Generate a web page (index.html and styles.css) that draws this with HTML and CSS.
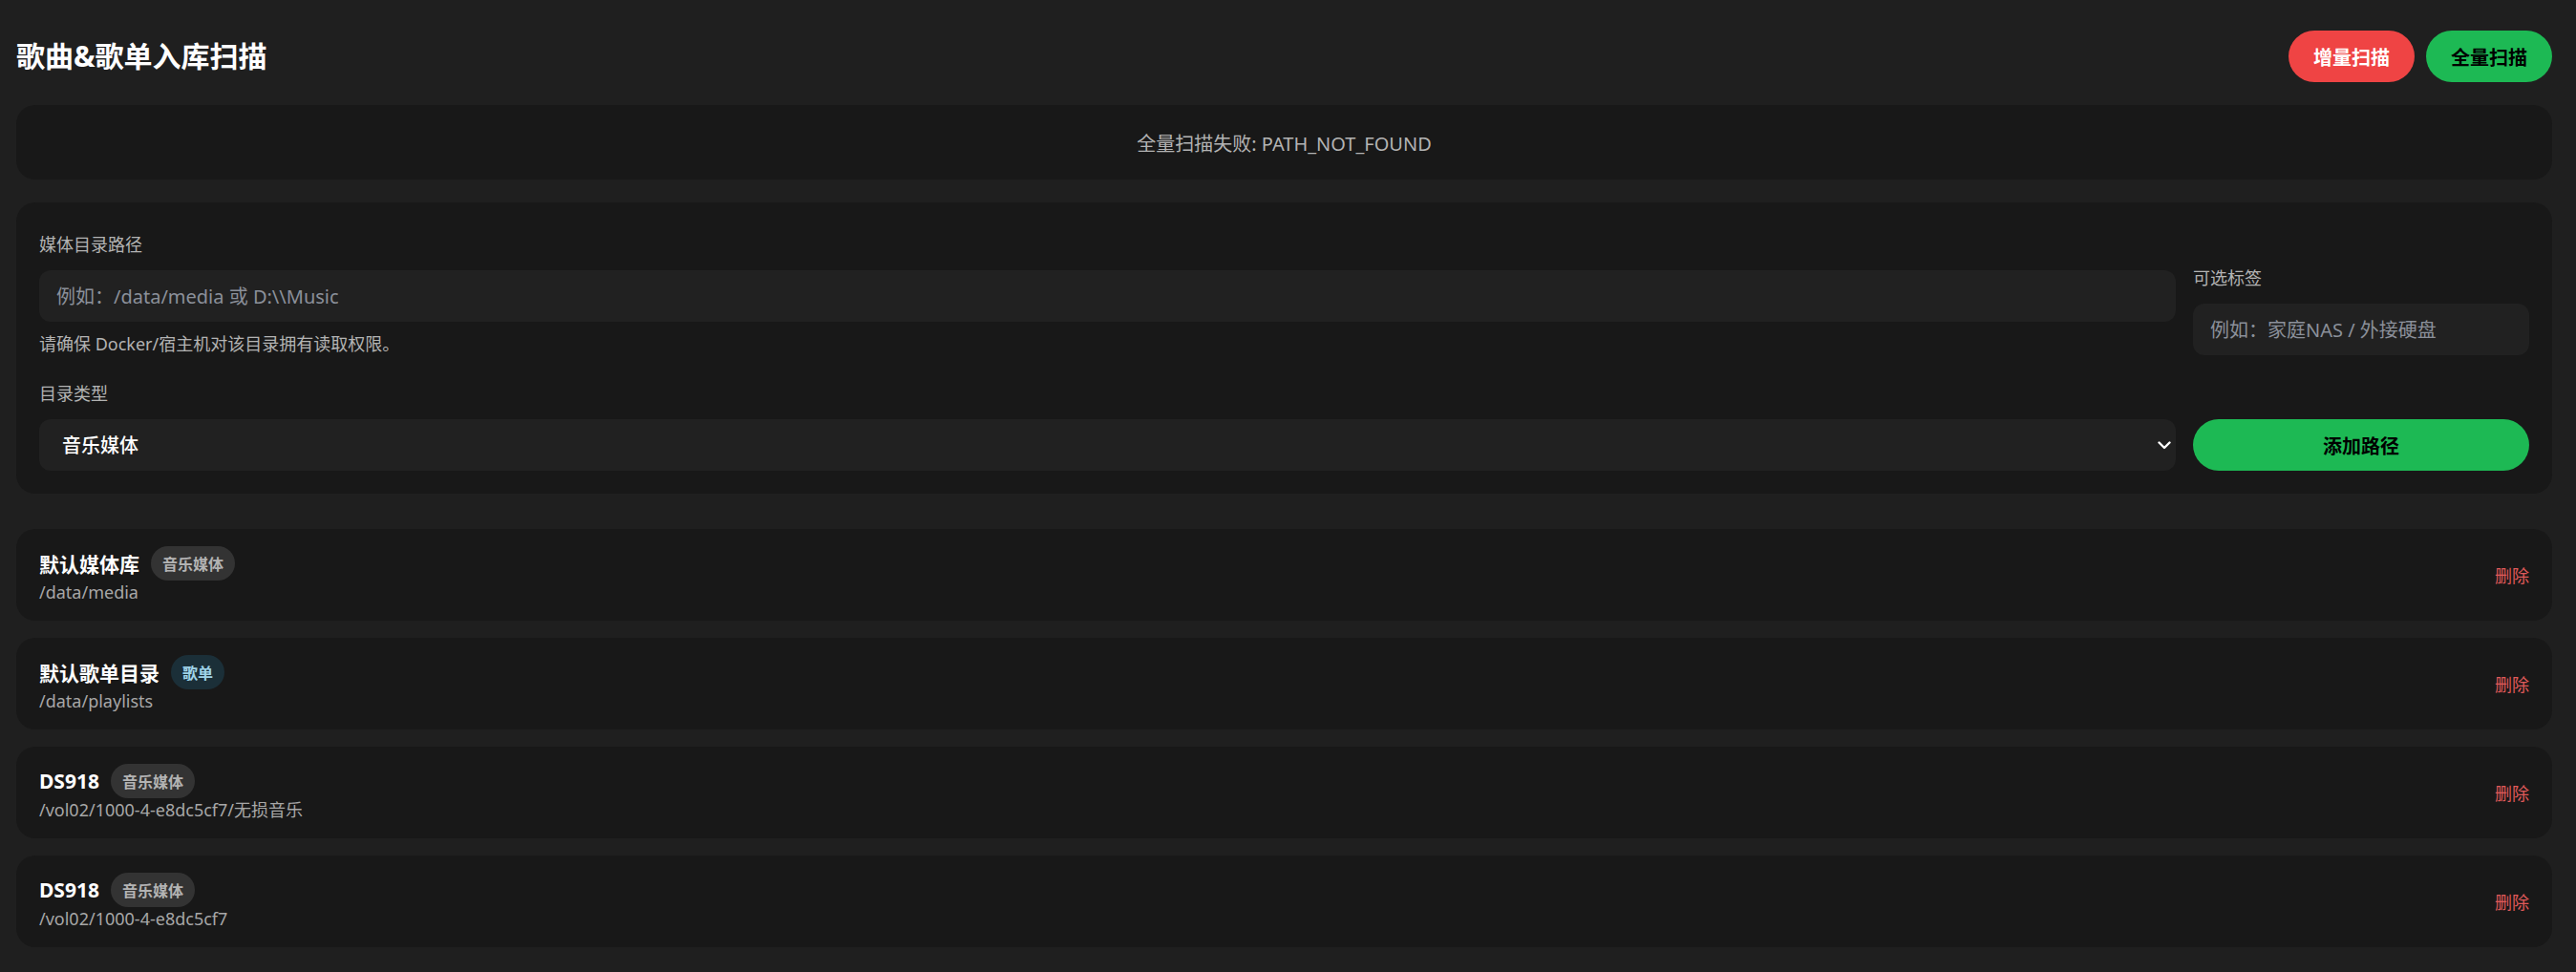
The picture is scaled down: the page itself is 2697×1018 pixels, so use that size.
FILE: index.html
```html
<!DOCTYPE html>
<html lang="zh-CN">
<head>
<meta charset="UTF-8" />
<meta name="viewport" content="width=device-width, initial-scale=1" />
<title>歌曲&amp;歌单入库扫描</title>
<link rel="stylesheet" href="styles.css">
</head>
<body>

<div class="page">

  <header class="header">
    <h1>歌曲&amp;歌单入库扫描</h1>
    <div class="actions">
      <button class="pill pill-red">增量扫描</button>
      <button class="pill pill-green">全量扫描</button>
    </div>
  </header>

  <div class="notice">全量扫描失败: PATH_NOT_FOUND</div>

  <!-- add path form -->
  <form class="form-card">
    <div class="field">
      <label class="label">媒体目录路径</label>
      <input class="input" type="text" placeholder="例如：/data/media 或 D:\\Music" />
      <p class="hint">请确保 Docker/宿主机对该目录拥有读取权限。</p>
    </div>
    <div class="field">
      <label class="label">可选标签</label>
      <input class="input" type="text" placeholder="例如：家庭NAS / 外接硬盘" />
    </div>
    <div class="field">
      <label class="label">目录类型</label>
      <div class="select-wrap">
        <select class="select">
          <option>音乐媒体</option>
          <option>歌单</option>
        </select>
        <svg class="chevron" width="14" height="9" viewBox="0 0 14 9"><path d="M1.5 1.5 L7 7 L12.5 1.5" fill="none" stroke="#fff" stroke-width="2.4" stroke-linecap="round" stroke-linejoin="round"/></svg>
      </div>
    </div>
    <div class="field">
      <button type="button" class="pill pill-green add-btn">添加路径</button>
    </div>
  </form>

  <!-- saved paths -->
  <div class="path-list">
    <div class="path-item">
      <div>
        <div class="name-row"><span class="name">默认媒体库</span><span class="badge">音乐媒体</span></div>
        <div class="path">/data/media</div>
      </div>
      <button class="del">删除</button>
    </div>
    <div class="path-item">
      <div>
        <div class="name-row"><span class="name">默认歌单目录</span><span class="badge badge-blue">歌单</span></div>
        <div class="path">/data/playlists</div>
      </div>
      <button class="del">删除</button>
    </div>
    <div class="path-item">
      <div>
        <div class="name-row"><span class="name">DS918</span><span class="badge">音乐媒体</span></div>
        <div class="path">/vol02/1000-4-e8dc5cf7/无损音乐</div>
      </div>
      <button class="del">删除</button>
    </div>
    <div class="path-item">
      <div>
        <div class="name-row"><span class="name">DS918</span><span class="badge">音乐媒体</span></div>
        <div class="path">/vol02/1000-4-e8dc5cf7</div>
      </div>
      <button class="del">删除</button>
    </div>
  </div>

</div>

</body>
</html>
```

FILE: styles.css
```css
/* --- Reset & basics --- */
* {
  margin: 0; padding: 0; box-sizing: border-box;
}
body, html {
  background: #1f1f1f;
  color: #fff;
  font-family: "Segoe UI", "Noto Sans", "Noto Sans CJK SC", sans-serif;
}
button, input, select {
  font-family: inherit;
}

.page {
  padding: 32px 25px 26px 17px;
}

/* --- Header --- */
.header {
  display: flex;
  justify-content: space-between;
  align-items: center;
  height: 54px;
  margin-bottom: 24px;
}
.header h1 {
  font-size: 30px;
  font-weight: 700;
  line-height: 1;
}
.actions {
  display: flex;
  gap: 12px;
}

.pill {
  height: 54px;
  padding: 0 26px;
  border: none;
  border-radius: 999px;
  font-size: 20px;
  font-weight: 700;
  cursor: pointer;
}
.pill-red {
  background: #ef4444;
  color: #fff;
}
.pill-green {
  background: #1db954;
  color: #000;
}

/* --- Error notice --- */
.notice {
  height: 78px;
  background: #181818;
  border-radius: 20px;
  display: flex;
  align-items: center;
  justify-content: center;
  font-size: 20px;
  color: #b3b3b3;
}

/* --- Form card --- */
.form-card {
  margin-top: 24px;
  background: #181818;
  border-radius: 20px;
  padding: 32px 24px 24px;
  display: grid;
  grid-template-columns: 1fr 352px;
  column-gap: 18px;
  row-gap: 28px;
  align-items: end;
}
.label {
  display: block;
  font-size: 18px;
  line-height: 24px;
  color: #b3b3b3;
  margin-bottom: 15px;
}
.input, .select {
  display: block;
  width: 100%;
  height: 54px;
  border: none;
  outline: none;
  border-radius: 12px;
  background: #212121;
  color: #fff;
  font-size: 20px;
}
.input {
  padding: 0 18px;
}
.input::placeholder {
  color: #8b909a;
}
.hint {
  margin-top: 11px;
  font-size: 18px;
  line-height: 24px;
  color: #b3b3b3;
}
.select-wrap {
  position: relative;
}
.select {
  appearance: none;
  padding: 0 24px;
  font-weight: 500;
}
.chevron {
  position: absolute;
  right: 5px;
  top: 23px;
  pointer-events: none;
}
.add-btn {
  width: 100%;
}

/* --- Path list --- */
.path-list {
  margin-top: 37px;
  display: flex;
  flex-direction: column;
  gap: 18px;
}
.path-item {
  background: #181818;
  border-radius: 20px;
  padding: 18px 24px;
  display: flex;
  justify-content: space-between;
  align-items: center;
}
.name-row {
  display: flex;
  align-items: center;
  gap: 12px;
}
.name {
  font-size: 21px;
  font-weight: 700;
}
.badge {
  height: 36px;
  padding: 0 12px;
  display: inline-flex;
  align-items: center;
  border-radius: 999px;
  background: #333;
  color: #b3b3b3;
  font-size: 16px;
  font-weight: 700;
}
.badge-blue {
  background: #1b2f38;
  color: #9fd3e8;
}
.path {
  font-size: 18px;
  line-height: 24px;
  color: #a7a7a7;
}
.del {
  background: none;
  border: none;
  font-size: 18px;
  color: #e05a5a;
  cursor: pointer;
}
```
